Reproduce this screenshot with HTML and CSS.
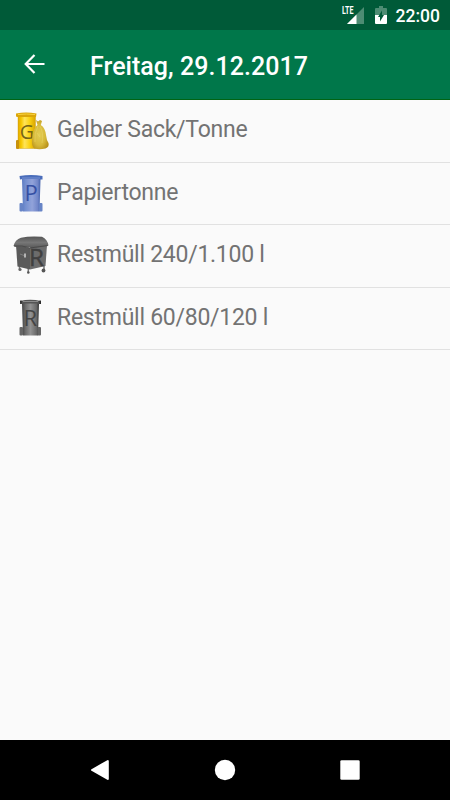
FILE: index.html
```
<!DOCTYPE html>
<html lang="de">
<head>
    <meta charset="UTF-8">
    <meta name="viewport" content="width=device-width, initial-scale=1.0">
    <title>Freitag, 29.12.2017</title>
    <link rel="stylesheet" href="styles.css">
</head>
<body>
    <div class="statusbar">
        <svg class="signal" width="24" height="20" viewBox="0 0 24 20">
            <path d="M23 2V19H6z" fill="#4d8c73"/>
            <path d="M15.500 9.500V19H6z" fill="#fff"/>
            <path d="M0 0H13V10H0z" fill="#005a38"/>
            <text class="lte" x="1" y="9" textLength="11.500" lengthAdjust="spacingAndGlyphs">LTE</text>
        </svg>
        <svg class="battery" width="12" height="18" viewBox="0 0 12 18">
            <path d="M4 0H8V2H11Q12 2 12 3V9H0V3Q0 2 1 2H4z" fill="#4d8c73"/>
            <path d="M0 9H12V17Q12 18 11 18H1Q0 18 0 17z" fill="#fff"/>
            <path d="M7 4.500V9H9L5 15.500V11H3z" fill="#005a38"/>
        </svg>
        <span class="clock">22:00</span>
    </div>
    <header class="toolbar">
        <svg class="back" width="22" height="20" viewBox="0 0 22 20">
            <path d="M20.500 10H2M10.500 1L1.700 10L10.500 19" fill="none" stroke="#fff" stroke-width="2.200"/>
        </svg>
        <h1>Freitag, 29.12.2017</h1>
    </header>
    <ul class="list">
        <li class="row">
            <svg class="icon" viewBox="0 0 46 50">
                <defs>
                    <linearGradient id="yellow">
                        <stop offset="0" stop-color="#e0a800"/>
                        <stop offset=".18" stop-color="#f6c800"/>
                        <stop offset=".38" stop-color="#ffe45a"/>
                        <stop offset=".65" stop-color="#fbd315"/>
                        <stop offset="1" stop-color="#d9a400"/>
                    </linearGradient>
                    <radialGradient id="sack" cx=".45" cy=".5" r=".6">
                        <stop offset="0" stop-color="#e3cd55"/>
                        <stop offset=".6" stop-color="#d7b93a"/>
                        <stop offset="1" stop-color="#b8921c"/>
                    </radialGradient>
                </defs>
                <path d="M10 10H27.500V42.500H10z" fill="url(#yellow)" stroke="#c99a10" stroke-width=".4"/>
                <path d="M8 7.500Q18 5.500 28.500 7.500L28 11H9.500L8 10.500z" fill="#dba60a"/>
                <path d="M10 8.500Q18 7.500 27 8.500" fill="none" stroke="#f8d441"/>
                <rect x="8" y="34" width="3" height="9" rx="1" fill="#c8920c"/>
                <text class="letter" x="11.800" y="33" font-size="19.500" fill="#756518">G</text>
                <path d="M28 14L30 15.500L32 14L34 15L32.800 19Q37.500 22 38.200 30Q38.500 34 40.500 37Q41.500 41 37.500 42.500Q31 44 26.500 42.500Q23.500 41 24 33Q25 22 29.500 19z" fill="url(#sack)"/>
                <path d="M30 20Q26 27 27 36M32 20Q36 27 34 37M29 27L32 31" fill="none" stroke="#f0df7e" stroke-width=".5" opacity=".7"/>
            </svg>
            <span class="label">Gelber Sack/Tonne</span>
        </li>
        <li class="row short">
            <svg class="icon" viewBox="0 1 46 50">
                <defs>
                    <linearGradient id="blue">
                        <stop offset="0" stop-color="#5d7cc3"/>
                        <stop offset=".2" stop-color="#7590d0"/>
                        <stop offset=".55" stop-color="#92a3da"/>
                        <stop offset=".85" stop-color="#7186c8"/>
                        <stop offset="1" stop-color="#4563ad"/>
                    </linearGradient>
                </defs>
                <path d="M14 11H32.500L31.500 43.500H15z" fill="url(#blue)"/>
                <path d="M11.500 8Q23 6 34.500 8V11.500H32L31 11H15L12 11.500z" fill="#4a6dba"/>
                <path d="M14 10H32" stroke="#7892d2"/>
                <rect x="11.500" y="35" width="3.500" height="8.500" rx="1" fill="#6784c6"/>
                <rect x="31" y="35" width="3.500" height="8.500" rx="1" fill="#6784c6"/>
                <text class="letter" x="16.500" y="33" font-size="22" fill="#3550a4">P</text>
            </svg>
            <span class="label">Papiertonne</span>
        </li>
        <li class="row">
            <svg class="icon" viewBox="0 1 46 50">
                <defs>
                    <linearGradient id="lid" x2="0" y2="1">
                        <stop offset="0" stop-color="#555"/>
                        <stop offset=".5" stop-color="#777"/>
                        <stop offset="1" stop-color="#555"/>
                    </linearGradient>
                </defs>
                <path d="M20.300 38V42M36 36V40M11.500 36V39" stroke="#777" stroke-width="1.500"/>
                <circle cx="20.300" cy="42.500" r="1.300" fill="#555"/>
                <circle cx="35.500" cy="40.500" r="1.900" fill="#555"/>
                <circle cx="12" cy="39.500" r="1.600" fill="#666"/>
                <path d="M8 15L22.500 18L22 39.500L9.500 36.500z" fill="#5a5a5a"/>
                <path d="M22 18L39 15L37.500 36L22 39.500z" fill="#6c6c6c"/>
                <path d="M5.500 16Q7 9.500 13 7.700Q22 5.800 34 6.800Q39.500 9.500 40.500 15.500L23 18.500L21.500 17L8 17z" fill="url(#lid)"/>
                <path d="M6 16Q14 15 22 18L40 15.500" fill="none" stroke="#444" stroke-width=".8"/>
                <path d="M12 24L16 25.500" stroke="#888" stroke-width=".8"/>
                <rect x="16" y="23.500" width="2" height="4" fill="#b5b5b5"/>
                <text class="letter" x="21" y="36" font-size="23" textLength="15" lengthAdjust="spacingAndGlyphs" fill="#404040" stroke="#404040" stroke-width=".4">R</text>
            </svg>
            <span class="label">Restmüll 240/1.100 l</span>
        </li>
        <li class="row short">
            <svg class="icon" viewBox="0 2 46 50">
                <defs>
                    <linearGradient id="grey">
                        <stop offset="0" stop-color="#444"/>
                        <stop offset=".2" stop-color="#6b6b6b"/>
                        <stop offset=".5" stop-color="#929292"/>
                        <stop offset=".85" stop-color="#696969"/>
                        <stop offset="1" stop-color="#303030"/>
                    </linearGradient>
                </defs>
                <path d="M14 11H31L30 43.500H15z" fill="url(#grey)"/>
                <path d="M12 9Q22 6.500 33 9V12H30L29 11.500H15L12.500 12z" fill="#555"/>
                <path d="M12.900 8.500V12M32.200 8.500V12" stroke="#252525" stroke-width="1.300"/>
                <path d="M15 9.500H30" stroke="#8a8a8a"/>
                <rect x="11.500" y="35" width="3.500" height="8.500" rx="1" fill="#666"/>
                <rect x="29.500" y="35" width="3.500" height="8.500" rx="1" fill="#666"/>
                <text class="letter" x="15.500" y="33.500" font-size="22" fill="#444">R</text>
            </svg>
            <span class="label">Restmüll 60/80/120 l</span>
        </li>
    </ul>
    <nav class="navbar">
        <svg width="20" height="20" viewBox="0 0 20 20">
            <path d="M17.800 1V19L2 10z" fill="#fff" stroke="#fff" stroke-width="2" stroke-linejoin="round"/>
        </svg>
        <svg width="20" height="20" viewBox="0 0 20 20">
            <circle cx="10" cy="10" r="10.200" fill="#fff"/>
        </svg>
        <svg width="20" height="20" viewBox="0 0 20 20">
            <rect x=".3" y=".3" width="19.400" height="19.400" rx="1.300" fill="#fff"/>
        </svg>
    </nav>
</body>
</html>
```

FILE: styles.css
```
* {
    box-sizing: border-box;
}

body {
    margin: 0;
    height: 800px;
    display: flex;
    flex-direction: column;
    overflow: hidden;
    background-color: #fafafa;
    font-family: Roboto, sans-serif;
}

svg {
    display: block;
    flex: none;
    overflow: visible;
}

.statusbar {
    display: flex;
    align-items: flex-start;
    justify-content: flex-end;
    height: 30px;
    padding: 5px 10px 0 0;
    background-color: #005a38;
    color: white;
}

.lte {
    font-size: 10.5px;
    font-weight: bold;
    fill: white;
}

.battery {
    margin: 1px 9px 0 10px;
}

.clock {
    font-size: 17.5px;
    font-weight: 500;
    line-height: 22px;
}

.toolbar {
    display: flex;
    align-items: center;
    height: 70px;
    padding-left: 24px;
    background-color: #00774a;
    border-bottom: 1px solid #006414;
    color: white;
}

.back {
    margin-bottom: 1px;
}

.toolbar h1 {
    margin: 5px 0 0 44px;
    font-size: 25px;
    font-weight: 500;
    line-height: 30px;
    letter-spacing: 0.04px;
}

.list {
    flex: 1;
    margin: 0;
    padding: 0;
    list-style: none;
}

.row {
    display: flex;
    height: 63px;
    padding: 6px 0 0 8px;
    border-bottom: 1px solid #e1e1e1;
}

.row.short {
    height: 62px;
}

.icon {
    width: 46px;
    height: 50px;
}

.letter {
    font-family: "Open Sans", sans-serif;
}

.label {
    margin-left: 3px;
    font-size: 23px;
    line-height: 48px;
    letter-spacing: -0.26px;
    color: #737373;
}

.navbar {
    display: flex;
    align-items: center;
    justify-content: center;
    gap: 105px;
    height: 60px;
    background-color: black;
}
```
